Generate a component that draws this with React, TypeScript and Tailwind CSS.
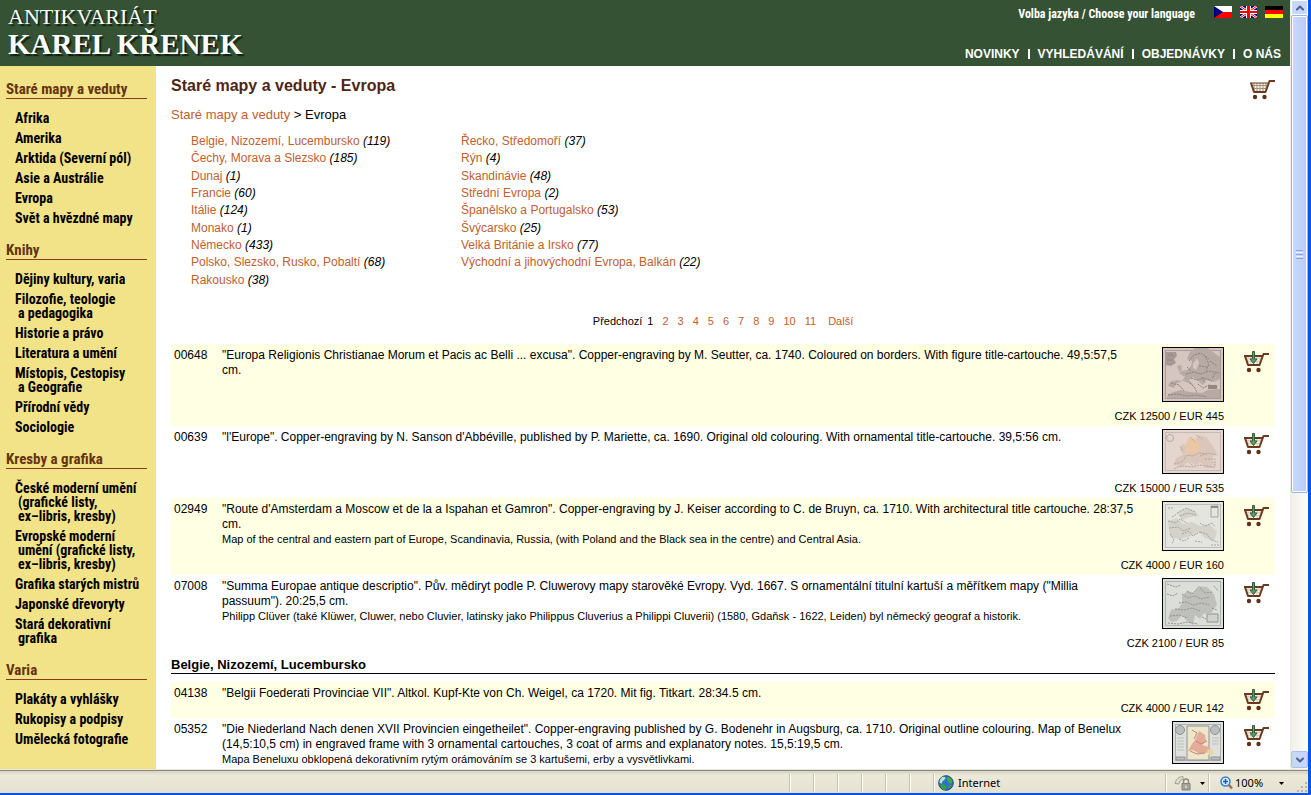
import React, { useState } from 'react';
import { ChevronDown, ChevronUp } from 'lucide-react';

// -----------------------------------------
// Data
// -----------------------------------------
type MenuSection = { title: string; items: string[][] };
type Category = { name: string; count: number };
type ThumbKind = 'seutter' | 'sanson' | 'keiser' | 'cluver' | 'benelux';
type Item = {
  code: string;
  text: string;
  note?: string;
  price?: string;
  thumb?: ThumbKind;
};

const menu: MenuSection[] = [
  {
    title: 'Staré mapy a veduty',
    items: [
      ['Afrika'],
      ['Amerika'],
      ['Arktida (Severní pól)'],
      ['Asie a Austrálie'],
      ['Evropa'],
      ['Svět a hvězdné mapy'],
    ],
  },
  {
    title: 'Knihy',
    items: [
      ['Dějiny kultury, varia'],
      ['Filozofie, teologie', 'a pedagogika'],
      ['Historie a právo'],
      ['Literatura a umění'],
      ['Místopis, Cestopisy', 'a Geografie'],
      ['Přírodní vědy'],
      ['Sociologie'],
    ],
  },
  {
    title: 'Kresby a grafika',
    items: [
      ['České moderní umění', '(grafické listy,', 'ex–libris, kresby)'],
      ['Evropské moderní', 'umění (grafické listy,', 'ex–libris, kresby)'],
      ['Grafika starých mistrů'],
      ['Japonské dřevoryty'],
      ['Stará dekorativní', 'grafika'],
    ],
  },
  {
    title: 'Varia',
    items: [['Plakáty a vyhlášky'], ['Rukopisy a podpisy'], ['Umělecká fotografie']],
  },
];

const categories: Category[] = [
  { name: 'Belgie, Nizozemí, Lucembursko', count: 119 },
  { name: 'Čechy, Morava a Slezsko', count: 185 },
  { name: 'Dunaj', count: 1 },
  { name: 'Francie', count: 60 },
  { name: 'Itálie', count: 124 },
  { name: 'Monako', count: 1 },
  { name: 'Německo', count: 433 },
  { name: 'Polsko, Slezsko, Rusko, Pobaltí', count: 68 },
  { name: 'Rakousko', count: 38 },
  { name: 'Řecko, Středomoří', count: 37 },
  { name: 'Rýn', count: 4 },
  { name: 'Skandinávie', count: 48 },
  { name: 'Střední Evropa', count: 2 },
  { name: 'Španělsko a Portugalsko', count: 53 },
  { name: 'Švýcarsko', count: 25 },
  { name: 'Velká Británie a Irsko', count: 77 },
  { name: 'Východní a jihovýchodní Evropa, Balkán', count: 22 },
];

const europeItems: Item[] = [
  {
    code: '00648',
    text: '"Europa Religionis Christianae Morum et Pacis ac Belli ... excusa". Copper-engraving by M. Seutter, ca. 1740. Coloured on borders. With figure title-cartouche. 49,5:57,5 cm.',
    price: 'CZK 12500 / EUR 445',
    thumb: 'seutter',
  },
  {
    code: '00639',
    text: '"l\'Europe". Copper-engraving by N. Sanson d\'Abbéville, published by P. Mariette, ca. 1690. Original old colouring. With ornamental title-cartouche. 39,5:56 cm.',
    price: 'CZK 15000 / EUR 535',
    thumb: 'sanson',
  },
  {
    code: '02949',
    text: '"Route d\'Amsterdam a Moscow et de la a Ispahan et Gamron". Copper-engraving by J. Keiser according to C. de Bruyn, ca. 1710. With architectural title cartouche. 28:37,5 cm.',
    note: 'Map of the central and eastern part of Europe, Scandinavia, Russia, (with Poland and the Black sea in the centre) and Central Asia.',
    price: 'CZK 4000 / EUR 160',
    thumb: 'keiser',
  },
  {
    code: '07008',
    text: '"Summa Europae antique descriptio". Pův. mědiryt podle P. Cluwerovy mapy starověké Evropy. Vyd. 1667. S ornamentální titulní kartuší a měřítkem mapy ("Millia passuum"). 20:25,5 cm.',
    note: 'Philipp Clüver (také Klüwer, Cluwer, nebo Cluvier, latinsky jako Philippus Cluverius a Philippi Cluverii) (1580, Gdaňsk - 1622, Leiden) byl německý geograf a historik.',
    price: 'CZK 2100 / EUR 85',
    thumb: 'cluver',
  },
];

const beneluxItems: Item[] = [
  {
    code: '04138',
    text: '"Belgii Foederati Provinciae VII". Altkol. Kupf-Kte von Ch. Weigel, ca 1720. Mit fig. Titkart. 28:34.5 cm.',
    price: 'CZK 4000 / EUR 142',
  },
  {
    code: '05352',
    text: '"Die Niederland Nach denen XVII Provincien eingetheilet". Copper-engraving published by G. Bodenehr in Augsburg, ca. 1710. Original outline colouring. Map of Benelux (14,5:10,5 cm) in engraved frame with 3 ornamental cartouches, 3 coat of arms and explanatory notes. 15,5:19,5 cm.',
    note: 'Mapa Beneluxu obklopená dekorativním rytým orámováním se 3 kartušemi, erby a vysvětlivkami.',
    thumb: 'benelux',
  },
];

const pages = [1, 2, 3, 4, 5, 6, 7, 8, 9, 10, 11];

// -----------------------------------------
// Icons
// -----------------------------------------
function Cart({ add = false }: { add?: boolean }) {
  return (
    <svg width="26" height="23" viewBox="0 0 26 23" aria-hidden="true">
      <path d="M2 6h17l-3 9H5z" fill="#f6f1e6" />
      <path
        d="M5 6v8M8 6v9M11 6v9M14 6v9M17 6v6M3 8.500h15M4 11.500h13"
        stroke={add ? '#d8cdbb' : '#a39282'}
        strokeWidth="1"
        fill="none"
      />
      <path d="M1 6h19" stroke="#6b3a1c" strokeWidth={add ? 2 : 1} />
      <path
        d="M2 6l3 9h11.500L20.500 4H26"
        stroke="#6b3a1c"
        strokeWidth="2"
        fill="none"
        strokeLinejoin="round"
      />
      <circle cx="6" cy="20" r="2.200" fill="#5e3018" />
      <circle cx="15.500" cy="20" r="2.200" fill="#5e3018" />
      {add && (
        <path
          d="M9.500 1.500h2v7.500h2.500l-3.500 4.500L7 9h2.500z"
          fill="#4fa367"
          stroke="#345a3e"
          strokeWidth="1"
        />
      )}
    </svg>
  );
}

function FlagCz() {
  return (
    <svg width="18" height="12" viewBox="0 0 18 12" aria-hidden="true">
      <path fill="#fff" d="M0 0h18v6H0z" />
      <path fill="#f00" d="M0 6h18v6H0z" />
      <path fill="#000080" d="M0 0l9 6-9 6z" />
    </svg>
  );
}

function FlagUk() {
  return (
    <svg width="17" height="12" viewBox="0 0 17 12" aria-hidden="true">
      <path fill="#000080" d="M0 0h17v12H0z" />
      <path stroke="#fff" strokeWidth="2.500" d="M0 0l17 12M17 0L0 12" />
      <path stroke="#f00" strokeWidth="1" d="M0 0l17 12M17 0L0 12" />
      <path fill="#fff" d="M6 0h5v12H6zM0 4h17v4H0z" />
      <path fill="#f00" d="M7 0h3v12H7zM0 5h17v2H0z" />
    </svg>
  );
}

function FlagDe() {
  return (
    <svg width="18" height="12" viewBox="0 0 18 12" aria-hidden="true">
      <path fill="#000" d="M0 0h18v4H0z" />
      <path fill="#f00" d="M0 4h18v4H0z" />
      <path fill="#ff0" d="M0 8h18v4H0z" />
    </svg>
  );
}

function Globe() {
  return (
    <svg width="16" height="16" viewBox="0 0 16 16" aria-hidden="true">
      <circle cx="8" cy="8" r="7.300" fill="#2f6fd0" stroke="#1d4596" />
      <path d="M3 3c2-2 4-1 4.500 0L6 5.500 4.500 6 4 8.500 1.500 8c0-2 .5-3.500 1.500-5z" fill="#b9e8b4" />
      <path d="M9 2c3 0 5 2 5.500 5l-2 2-2.500-2-1-2z" fill="#3cb034" />
      <path d="M4 9l3 1 2 2-2 3c-2-.5-4-2-4.500-4zM11 10l2.500 0-2 3.500-1.500-1z" fill="#36a52f" />
    </svg>
  );
}

function Lock() {
  return (
    <svg width="18" height="16" viewBox="0 0 18 16" aria-hidden="true">
      <path d="M1 8.500C2 4 5 1.500 9 1.500v3C7 4.500 5.500 6 5 9z" fill="#dddbd1" stroke="#a3a196" />
      <path d="M9.500 9V6.500a2.500 2.500 0 0 1 5 0V9" fill="none" stroke="#8f8d82" strokeWidth="1.500" />
      <path d="M8 8.500h8V15H8z" fill="#a5a398" stroke="#85837a" />
      <path d="M12 10.500v2.500" stroke="#fff" />
    </svg>
  );
}

function Magnifier() {
  return (
    <svg width="13" height="14" viewBox="0 0 13 14" aria-hidden="true">
      <path d="M8.500 8.500l3.500 4" stroke="#a5703a" strokeWidth="2.500" />
      <circle cx="5.500" cy="5.500" r="4.500" fill="#d8ecff" stroke="#3f7fd0" strokeWidth="1.500" />
      <path d="M5.500 3v5M3 5.500h5" stroke="#1f59c0" strokeWidth="1.500" />
    </svg>
  );
}

function Caret() {
  return (
    <svg width="5" height="3" viewBox="0 0 5 3" aria-hidden="true">
      <path d="M0 0h5L2.500 3z" fill="#000" />
    </svg>
  );
}

function Grip() {
  return (
    <svg width="11" height="11" viewBox="0 0 11 11" aria-hidden="true">
      <path d="M9 1h2v2H9zM5 5h2v2H5zM9 5h2v2H9zM1 9h2v2H1zM5 9h2v2H5zM9 9h2v2H9z" fill="#b8b4a2" />
    </svg>
  );
}

// -----------------------------------------
// Map thumbnails
// -----------------------------------------
const thumbs: Record<
  ThumbKind,
  { w: number; h: number; paper: string; land: string; ink: string; label: string }
> = {
  seutter: { w: 62, h: 55, paper: '#d6c6c0', land: '#b7aaa5', ink: '#8d7f7b', label: 'Europa Religionis' },
  sanson: { w: 62, h: 45, paper: '#e4d6cf', land: '#dac6ba', ink: '#b8a59c', label: "l'Europe" },
  keiser: { w: 62, h: 50, paper: '#e4e5df', land: '#d3d3cb', ink: '#a3a49c', label: "Route d'Amsterdam a Moscow" },
  cluver: { w: 62, h: 51, paper: '#dcdeda', land: '#bfc0bb', ink: '#92948e', label: 'Summa Europae' },
  benelux: { w: 52, h: 43, paper: '#dfe0dd', land: '#eee6c8', ink: '#8c9295', label: 'Die Niederland' },
};

function Thumb({ kind }: { kind: ThumbKind }) {
  const t = thumbs[kind];
  return (
    <svg width={t.w} height={t.h} viewBox={`0 0 ${t.w} ${t.h}`} role="img" aria-label={t.label}>
      <rect width={t.w} height={t.h} fill={t.paper} />
      <rect x="3.500" y="3.500" width={t.w - 7} height={t.h - 7} fill="none" stroke={t.ink} opacity=".6" />
      {kind === 'seutter' && (
        <>
          <path d="M4 5h10l1 4-3 3 2 4-5 3-5-1z" fill="#a69893" />
          <path
            d="M8 35l7-2 5 1 3-4-6-4 3-2 5-1 4-4 1-5-5-2 3-7 6-5 9-1 8 6 7 5v22l-6 3-8-2-3 5-5-4-5-4-4 3 5 6-6-3-5-2-6 2-3 5-6-2z"
            fill={t.land}
          />
          <path d="M15 19l4-1 1 5-3 2zM6 47l12-4 10 2 12 1 6-3 12-1v9H5z" fill={t.land} />
          <path d="M31 17l4-6 2 5-3 7-3-2z" fill={t.paper} />
          <path
            d="M6 8h6M5 13h6M27 14l5-6 7-2 8 6M24 27l8-2 7 2 9-3 9 2M25 20l4 4M29 31l6 2 7-2 8 3M9 36l8 2 5 6M28 36l5 5 2 5M36 37l5 4 6-3 8 2M43 9l4 8-3 7M48 14l7 5M37 19l8 1M40 30l3 6M6 48l9-1 10 2 9-1 11 2M53 26l-3 6"
            stroke={t.ink}
            fill="none"
            strokeDasharray="2 1"
          />
          <path d="M46 38h9v4h-9z" fill="#96877f" />
        </>
      )}
      {kind === 'sanson' && (
        <>
          <path d="M12 35l2-6 7-3-3-6 3-6 4 4-1 7 6-2 2-9 4-8 8 2 6 8 5 8-6 6 5 5-9 3-7-5-5 4-5-5-6 4-3 3z" fill={t.land} />
          <path d="M26 9h6l5 4 1 8-6 4-7-1-2-6z" fill="#ebc7a6" />
          <circle cx="8" cy="9" r="3.500" fill="none" stroke={t.ink} />
          <path
            d="M12 35l8-2 5-7 6 1 6-3 8 1M18 17l3 5M28 8l6 6M27 33l4 4M38 27l8-3 10 2M12 40l7-3 12 1 7-2 13 2M43 30h10v8H43M34 6l6 4"
            stroke={t.ink}
            fill="none"
            strokeDasharray="2 1"
          />
        </>
      )}
      {kind === 'keiser' && (
        <>
          <path d="M15 12l10-5 8 3 4 5-9 1-8 3zM6 20l9-3 6 6 9-2 8 4 9-2 8 8-3 9-9-3-6-6-8 4-10 3-11-2z" fill={t.land} />
          <path d="M49 5h7v11h-7z" fill="none" stroke={t.ink} />
          <path d="M49 5h7v2h-7z" fill="#8d8e86" />
          <path
            d="M6 7h6M15 12l9-5 9 4M18 15l8-3 8 2M6 20l8 2 4-4 7 4M7 27l9-1 5 4 8-3M20 33l7-3 4 5 7-4M17 38l5 2 5-3M38 22l5 3 7-3 3 4M38 31l7 2 4 6 7 2M8 33l4 5-2 5M33 40l7 1M49 44h8M10 16l5-3"
            stroke={t.ink}
            fill="none"
            strokeDasharray="2 1"
          />
        </>
      )}
      {kind === 'cluver' && (
        <>
          <path d="M6 40l3-8 8-2 3-5 0-7 5-5 7 2 4-7 9 1 7 7 3 11-6 8-8 1-3 5-5-4-2 10-6-4-5-6-5 6-6 1z" fill={t.land} />
          <path d="M45 36h11v8H45z" fill="#d0d2ce" stroke={t.ink} />
          <path
            d="M5 6l9 3 5-2M5 16l6 2 5-3M20 16l6 4 7-2 6 3 9-2M17 25l7-1 7 3 8-2 8 2M13 31l9 1 8-2 8 3M8 38l9-1 9 3M25 13l5 3 5-5M38 10l5 5 8-1M6 45l10 1 9-2 11 2M40 39l4 2M50 30l5 2M52 8l4 5"
            stroke={t.ink}
            fill="none"
            strokeDasharray="2 1"
          />
        </>
      )}
      {kind === 'benelux' && (
        <>
          <path d="M15 5h22v34H15z" fill={t.land} stroke={t.ink} />
          <path d="M27 10l6 4 1 6-4 4 7 2v5l-9 2-7-4-5 1 4-7 3-4z" fill="#e3ab98" />
          <path d="M20 9l5 3-3 6M24 20l5 3 6-3M18 30l7 3 8-1" stroke="#c98476" fill="none" />
          <path d="M35 29l5-1 2 5-6 1z" fill="#e8d79a" />
          <circle cx="8" cy="9" r="4.500" fill="#babebd" stroke={t.ink} />
          <circle cx="43" cy="9" r="4.500" fill="#babebd" stroke={t.ink} />
          <path d="M4 36h9v3H4zM39 36h9v3h-9z" fill="#babebd" stroke={t.ink} />
          <path d="M5 17h7M5 20h7M5 23h7M5 26h7M5 29h7M40 17h7M40 20h7M40 23h7" stroke={t.ink} opacity=".4" />
        </>
      )}
      <rect x=".5" y=".5" width={t.w - 1} height={t.h - 1} fill="none" stroke="#000" />
    </svg>
  );
}

// -----------------------------------------
// Page parts
// -----------------------------------------
function Header() {
  const links = ['NOVINKY', 'VYHLEDÁVÁNÍ', 'OBJEDNÁVKY', 'O NÁS'];
  return (
    <header className="flex h-[66px] shrink-0 justify-between bg-[#355235] pr-[7px] pl-2 text-white">
      <a href="#" className="pt-1 font-['Liberation_Serif',serif] [text-shadow:2px_2px_1px_#10200f]">
        <span className="block text-[22px] leading-[26px]">ANTIKVARIÁT</span>
        <span className="block text-[29px] leading-[28px] font-bold">KAREL KŘENEK</span>
      </a>
      <div className="flex flex-col items-end justify-between py-1 font-bold">
        <div className="flex h-5 items-center">
          <span className="mr-[19px] font-['Roboto_Condensed','Liberation_Sans',sans-serif] text-xs">
            Volba jazyka / Choose your language
          </span>
          <div className="flex gap-2 pb-1">
            <button aria-label="Čeština"><FlagCz /></button>
            <button aria-label="English"><FlagUk /></button>
            <button aria-label="Deutsch"><FlagDe /></button>
          </div>
        </div>
        <nav className="flex items-center pr-[2px] text-xs leading-4">
          {links.map((link, i) => (
            <React.Fragment key={link}>
              {i > 0 && <span className="mx-2 h-[10px] w-[2px] bg-white" />}
              <a href="#">{link}</a>
            </React.Fragment>
          ))}
        </nav>
      </div>
    </header>
  );
}

function Sidebar() {
  return (
    <aside className="flex w-[156px] shrink-0 flex-col gap-4 bg-[#f3e388] pt-[14px] pr-[9px] pl-[6px] font-['Roboto_Condensed','Liberation_Sans',sans-serif] font-bold">
      {menu.map((section) => (
        <section key={section.title}>
          <h2 className="border-b border-[#8a3a1e] text-[15px] leading-[18px] text-[#663311]">
            {section.title}
          </h2>
          <ul className="mt-3 flex flex-col gap-[6px] pl-3 text-sm leading-[14px] text-black">
            {section.items.map((lines) => (
              <li key={lines.join(' ')} className="-indent-[3px] whitespace-nowrap">
                <a href="#">
                  {lines.map((line, i) => (
                    <span key={line} className={i > 0 ? 'block indent-0' : 'block'}>
                      {line}
                    </span>
                  ))}
                </a>
              </li>
            ))}
          </ul>
        </section>
      ))}
    </aside>
  );
}

function ItemTable({ items }: { items: Item[] }) {
  return (
    <table className="w-full table-fixed text-xs leading-[15px]">
      <colgroup>
        <col className="w-[51px]" />
        <col />
        <col className="w-[88px]" />
        <col className="w-[51px]" />
      </colgroup>
      {items.map((item) => (
        <tbody key={item.code} className="align-top even:bg-[#ffffe3]">
          <tr>
            <td rowSpan={2} className="pt-1 pl-[3px]">{item.code}</td>
            <td className="pt-1">
              {item.text}
              {item.note && <p className="text-[11px] leading-[14px]">{item.note}</p>}
            </td>
            <td className={item.thumb ? 'pt-[3px] pb-[7px]' : ''}>
              {item.thumb && (
                <a href="#" className="flex justify-end">
                  <Thumb kind={item.thumb} />
                </a>
              )}
            </td>
            <td rowSpan={2} className="pt-[6px] pl-[19px]">
              <button aria-label={`Objednat ${item.code}`} className="block">
                <Cart add />
              </button>
            </td>
          </tr>
          <tr>
            <td colSpan={2} className="pb-[3px] text-right text-[11px] leading-[14px]">{item.price}</td>
          </tr>
        </tbody>
      ))}
    </table>
  );
}

function Scrollbar() {
  return (
    <div className="flex w-[18px] shrink-0 flex-col border-l border-[#eeede5] bg-linear-to-r from-[#f0efe8] to-[#fefefb]">
      <button
        aria-label="Posunout nahoru"
        className="flex h-[15px] items-center justify-center rounded-b-xs border border-white bg-[#c6d6fc] text-[#4d6185]"
      >
        <ChevronUp size={12} strokeWidth={4} />
      </button>
      <div className="flex min-h-0 flex-1 flex-col">
        <div className="flex h-[65%] flex-col items-center justify-center gap-px rounded-xs border border-[#98b0ee] bg-linear-to-r from-[#cad9fe] to-[#b9cbf7] shadow-[inset_0_0_0_1px_#fff]">
          <span className="h-px w-[7px] bg-[#8ca4e0]" />
          <span className="h-px w-[7px] bg-[#eef4fe]" />
          <span className="h-px w-[7px] bg-[#8ca4e0]" />
          <span className="h-px w-[7px] bg-[#eef4fe]" />
          <span className="h-px w-[7px] bg-[#8ca4e0]" />
        </div>
      </div>
      <button
        aria-label="Posunout dolů"
        className="mb-px flex h-[17px] items-center justify-center rounded-xs border border-[#a9bff2] bg-[#c6d6fc] text-[#4d6185]"
      >
        <ChevronDown size={12} strokeWidth={4} />
      </button>
    </div>
  );
}

function StatusBar() {
  const sep = 'h-[18px] w-[2px] border-l border-[#c5c2b2] bg-white';
  return (
    <footer className="flex h-[23px] shrink-0 items-center justify-end border-t border-[#8d8b7f] bg-linear-to-b from-[#d6d3c3] via-[#ece9d8] via-20% to-[#e4e1d0] pt-[2px] font-['Noto_Sans',sans-serif] text-[11px] text-black">
      <div className="flex gap-[22px]">
        {[0, 1, 2, 3, 4, 5, 6].map((n) => (
          <span key={n} className={sep} />
        ))}
      </div>
      <div className="flex w-[230px] items-center gap-1 pl-[3px]">
        <Globe />
        Internet
      </div>
      <span className={sep} />
      <button className="flex w-[41px] items-center gap-2 pl-[7px]" aria-label="Zabezpečení">
        <Lock />
        <Caret />
      </button>
      <span className={sep} />
      <button className="flex w-[86px] items-center gap-[2px] pl-[10px]">
        <Magnifier />
        100%
        <span className="ml-auto pr-[12px]">
          <Caret />
        </span>
      </button>
      <span className="mr-px self-end pb-px">
        <Grip />
      </span>
    </footer>
  );
}

// -----------------------------------------
// App
// -----------------------------------------
function App() {
  const [page, setPage] = useState(1);

  return (
    <div className="flex h-screen flex-col overflow-hidden border-r-[3px] border-b-2 border-[#0a55e8] bg-white font-['Liberation_Sans',Arial,sans-serif] text-black">
      <div className="flex min-h-0 flex-1 border-b border-[#e8e6da]">
        <div className="flex min-w-0 flex-1 flex-col overflow-hidden">
          <Header />
          <div className="flex min-h-0 flex-1">
            <Sidebar />
            <main className="min-w-0 flex-1 px-[15px] pt-[11px]">
              <div className="flex h-[29px] items-start justify-between">
                <h1 className="text-base leading-[18px] font-bold text-[#4f2614]">
                  Staré mapy a veduty - Evropa
                </h1>
                <button aria-label="Košík">
                  <Cart />
                </button>
              </div>
              <p className="text-[13px] leading-[18px]">
                <a href="#" className="text-[#c1602e]">Staré mapy a veduty</a> &gt; Evropa
              </p>

              <ul className="mt-[9px] ml-5 grid h-[156px] grid-flow-col grid-cols-[270px_auto] grid-rows-9 justify-start text-xs leading-[17px]">
                {categories.map((c) => (
                  <li key={c.name} className="whitespace-nowrap">
                    <a href="#" className="text-[#c1602e]">{c.name}</a> <i>({c.count})</i>
                  </li>
                ))}
              </ul>

              <nav className="mt-6 flex items-center justify-center text-[11px] leading-4">
                <span className="mr-[5px]">Předchozí</span>
                <div className="flex gap-[9px]">
                  {pages.map((n) => (
                    <button
                      key={n}
                      onClick={() => setPage(n)}
                      className={n === page ? 'text-black' : 'text-[#c1602e]'}
                    >
                      {n}
                    </button>
                  ))}
                </div>
                <a href="#" className="ml-3 text-[#c1602e]">Další</a>
              </nav>

              <div className="mt-[15px]">
                <ItemTable items={europeItems} />
              </div>

              <h2 className="mt-1 mb-2 border-b border-black text-[13px] leading-[16px] font-bold">
                Belgie, Nizozemí, Lucembursko
              </h2>
              <ItemTable items={beneluxItems} />
            </main>
          </div>
        </div>
        <Scrollbar />
      </div>
      <StatusBar />
    </div>
  );
}

export default App;
